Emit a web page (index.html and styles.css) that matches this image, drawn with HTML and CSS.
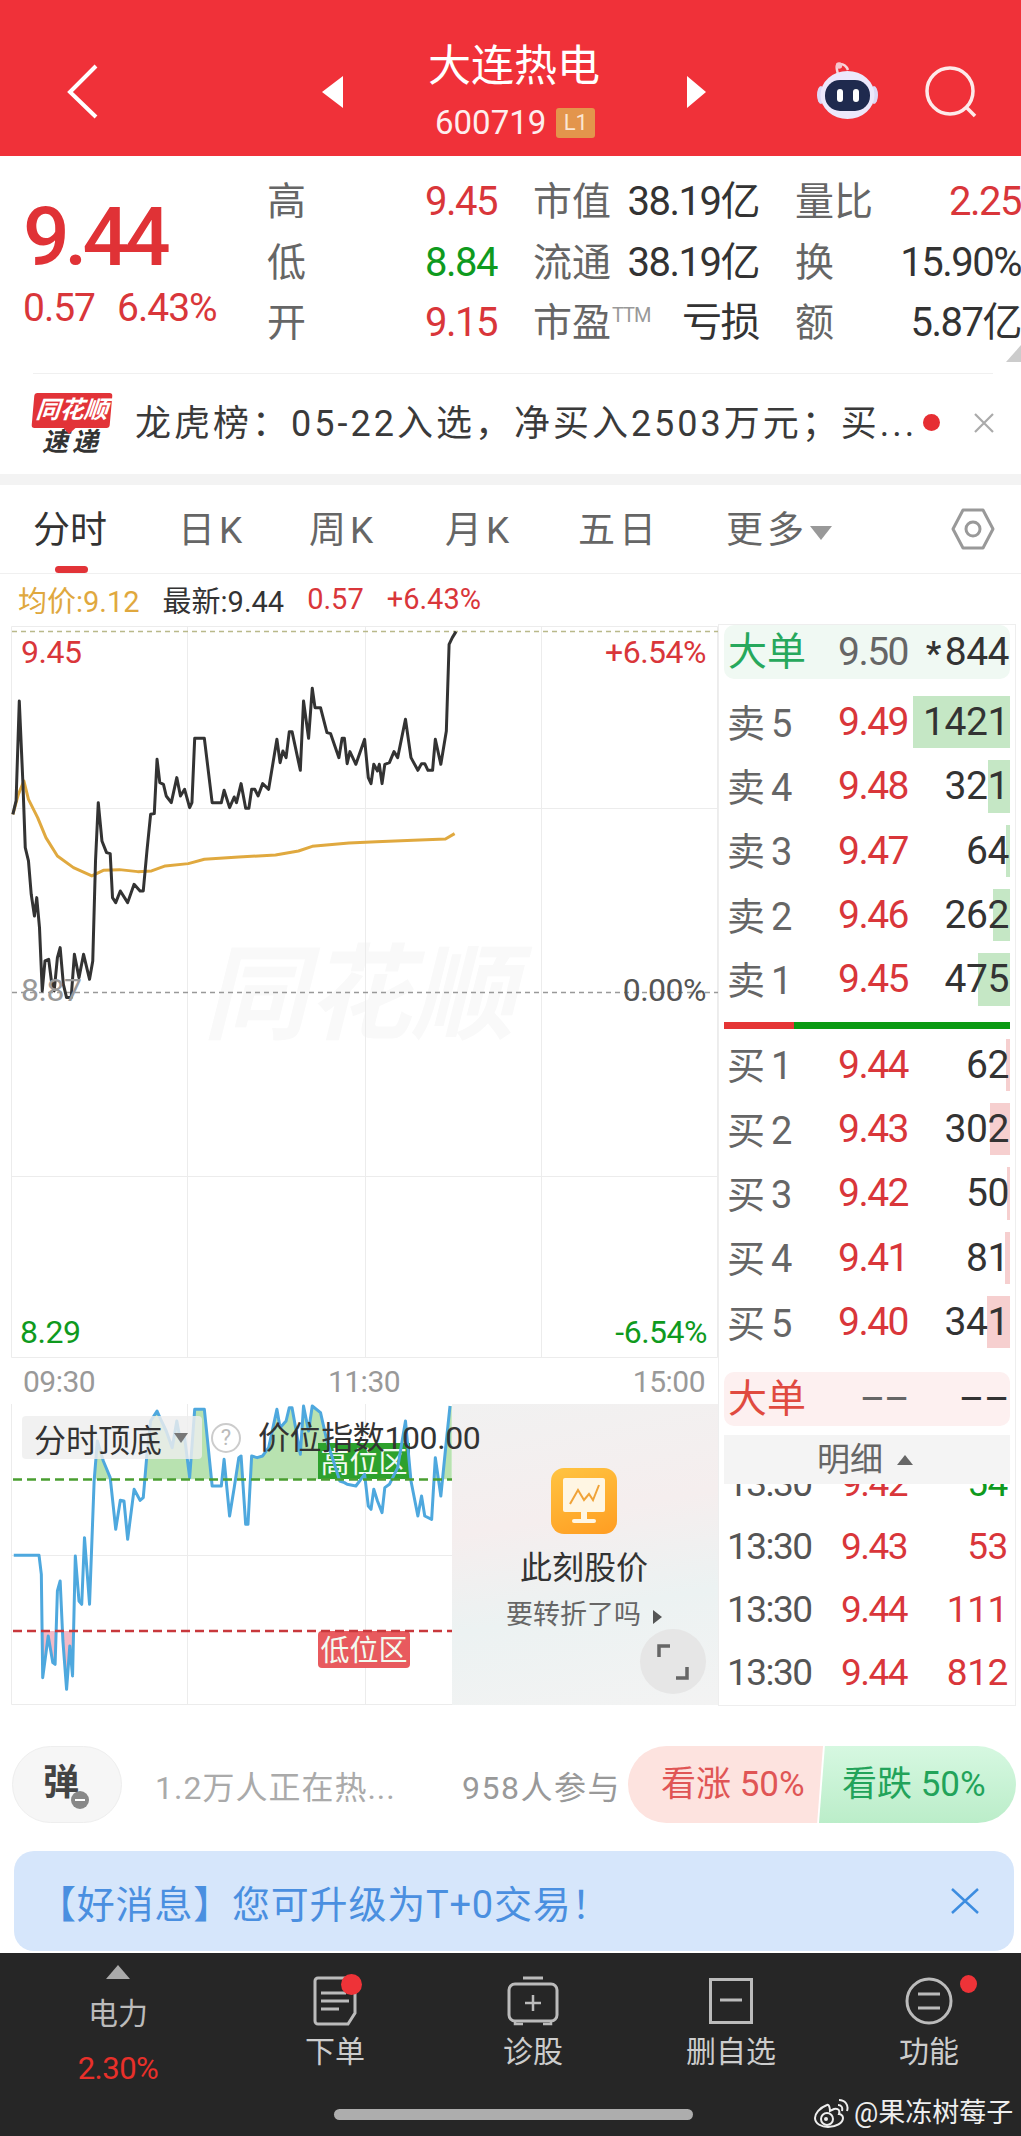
FILE: index.html
```html
<!DOCTYPE html>
<html lang="zh-CN">
<head>
	<meta charset="UTF-8">
	<title>大连热电</title>
	<link rel="stylesheet" href="styles.css">
</head>
<body>
<div class="page">

	<header class="topbar">
		<svg class="back" width="31" height="55" viewBox="0 0 31 55"><path d="M29 2 3 28l26 25" fill="none" stroke="#fff" stroke-width="4"/></svg>
		<span class="tri tri-left"></span>
		<div class="title">
			<div class="title__name">大连热电</div>
			<div class="title__code">600719<span class="badge-l1">L1</span></div>
		</div>
		<span class="tri tri-right"></span>
		<svg class="robot" width="63" height="57" viewBox="0 0 63 57">
			<path d="M22 12C20 5 20 2 24 2c3 0 6 1 8 6" fill="none" stroke="#f7d6dc" stroke-width="2.5"/>
			<circle cx="23" cy="3.5" r="3.2" fill="#f7c4cc"/>
			<ellipse cx="5" cy="33" rx="4" ry="9" fill="#dcd8f5"/>
			<ellipse cx="58" cy="33" rx="4" ry="9" fill="#dcd8f5"/>
			<ellipse cx="31.500" cy="33" rx="27" ry="24" fill="#ece8fb"/>
			<rect x="9" y="18" width="45" height="31" rx="15" fill="#1f2a4e"/>
			<rect x="21" y="27" width="6" height="13" rx="3" fill="#fff"/>
			<rect x="37" y="27" width="6" height="13" rx="3" fill="#fff"/>
		</svg>
		<svg class="search" width="52" height="52" viewBox="0 0 52 52">
			<circle cx="25" cy="25" r="23" fill="none" stroke="#fdeaea" stroke-width="3.500"/>
			<path d="M41 41l9 9" stroke="#fdeaea" stroke-width="3.500"/>
		</svg>
	</header>

	<section class="quote">
		<div class="quote__price">
			<div class="price">9.44</div>
			<div class="change"><span>0.57</span><span>6.43%</span></div>
		</div>
		<div class="stats">
			<div class="lab">高</div><div class="val up">9.45</div>
			<div class="lab lab-mid">市值</div><div class="val dark">38.19亿</div>
			<div class="lab lab-end">量比</div><div class="val up">2.25</div>

			<div class="lab">低</div><div class="val down">8.84</div>
			<div class="lab lab-mid">流通</div><div class="val dark">38.19亿</div>
			<div class="lab lab-end">换</div><div class="val dark">15.90%</div>

			<div class="lab">开</div><div class="val up">9.15</div>
			<div class="lab lab-mid">市盈<sup class="ttm">TTM</sup></div><div class="val dark">亏损</div>
			<div class="lab lab-end">额</div><div class="val dark">5.87亿</div>
		</div>
		<span class="corner"></span>
	</section>

	<section class="news">
		<div class="news__logo">
			<div class="news__tag">同花顺</div>
			<div class="news__sub">速递</div>
		</div>
		<div class="news__text">龙虎榜：05-22入选，净买入2503万元；买...</div>
		<span class="news__dot"></span>
		<svg class="news__close" width="22" height="20" viewBox="0 0 22 20"><path d="M2 1l18 18M20 1 2 19" stroke="#aaa" stroke-width="2.200"/></svg>
	</section>

	<nav class="tabs">
		<a class="tab tab--on">分时</a>
		<a class="tab">日K</a>
		<a class="tab">周K</a>
		<a class="tab">月K</a>
		<a class="tab">五日</a>
		<a class="tab">更多<i class="tab__arrow"></i></a>
		<svg class="tab__gear" width="44" height="42" viewBox="0 0 44 42">
			<path d="M12 2h20l10 19-10 19H12L2 21z" fill="none" stroke="#999" stroke-width="3" stroke-linejoin="round"/>
			<circle cx="22" cy="21" r="7" fill="none" stroke="#999" stroke-width="3"/>
		</svg>
	</nav>

	<div class="infoline">
		<span class="avg">均价:9.12</span>
		<span class="dark">最新:9.44</span>
		<span class="up">0.57</span>
		<span class="up">+6.43%</span>
	</div>

	<div class="market">
		<div class="charts">
			<div class="chart">
				<div class="chart__mark">同花顺</div>
				<svg class="chart__svg" width="707" height="732" viewBox="11 625 707 732">
					<g fill="none" stroke="#ececec" stroke-width="1">
						<path d="M11.500 625.500H717.500V1356.500H11.500Z"/>
						<path d="M187.500 625V1357M365.500 625V1357M541.500 625V1357M11 807.500H718M11 1175.500H718"/>
					</g>
					<path d="M12 630.500H718" stroke="#b9b98a" stroke-width="1.500" stroke-dasharray="5 4"/>
					<path d="M12 991.500H718" stroke="#999" stroke-width="1.500" stroke-dasharray="5 4"/>
					<g transform="translate(0 500) scale(.4592 .3333)" fill="none" stroke-linejoin="round">
						<path vector-effect="non-scaling-stroke" stroke="#e0a93f" stroke-width="3" d="M28 940 40 880 52 840 62 895 82 950 100 1010 125 1065 160 1100 200 1125 225 1108 260 1106 300 1112 330 1110 360 1095 410 1088 445 1075 520 1068 600 1062 650 1050 680 1036 760 1026 820 1022 900 1018 970 1014 990 998"/>
						<path vector-effect="non-scaling-stroke" stroke="#333" stroke-width="3" d="M28 940 35 900 42 600 50 850 55 1040 62 1080 68 1180 75 1245 80 1190 86 1280 92 1470 98 1380 106 1375 112 1440 118 1470 125 1370 131 1340 138 1450 145 1490 155 1490 162 1360 172 1430 182 1360 195 1435 202 1380 208 1080 214 905 222 1020 232 1055 240 1058 245 1190 252 1205 262 1170 278 1205 292 1150 305 1170 312 1170 320 1050 328 940 336 938 342 775 348 845 356 850 362 885 373 905 385 830 393 885 402 865 413 920 418 905 424 712 445 712 462 905 482 905 488 868 500 920 510 888 515 905 525 848 535 922 542 922 548 865 555 865 562 885 572 848 585 865 603 715 610 785 616 750 623 770 630 692 636 692 654 808 661 600 672 712 680 562 686 620 698 620 712 695 720 698 738 770 745 712 750 712 756 788 762 752 775 790 794 715 802 830 808 848 814 790 822 810 826 790 832 848 838 790 848 785 858 752 866 770 883 655 895 770 910 808 918 788 925 788 932 808 942 808 948 715 960 790 972 690 978 430 985 410 993 392"/>
					</g>
				</svg>
				<span class="tag tag--tl up">9.45</span>
				<span class="tag tag--tr up">+6.54%</span>
				<span class="tag tag--ml">8.87</span>
				<span class="tag tag--mr">0.00%</span>
				<span class="tag tag--bl down">8.29</span>
				<span class="tag tag--br down">-6.54%</span>
			</div>

			<div class="axis"><span>09:30</span><span>11:30</span><span>15:00</span></div>

			<div class="osc">
				<svg class="osc__svg" width="707" height="301" viewBox="11 1403 707 301">
					<defs>
						<clipPath id="clip-high"><rect x="0" y="190" width="984" height="225"/></clipPath>
						<clipPath id="clip-low"><rect x="0" y="870" width="984" height="240"/></clipPath>
						<path id="osc-area" d="M30 643 85 643 90 700 93 1010 105 885 115 965 120 970 125 750 131 720 137 900 145 1045 152 915 158 1005 164 645 172 780 178 790 184 590 195 790 205 420 212 300 225 360 240 410 252 565 262 478 270 480 278 595 292 445 305 478 312 470 320 340 328 240 342 210 350 235 362 270 375 320 385 240 393 300 402 290 413 410 424 205 445 205 462 435 482 435 488 355 500 525 510 440 520 350 525 345 535 550 540 550 548 345 560 350 572 345 585 320 603 205 610 260 623 240 630 200 636 200 654 340 661 195 672 270 680 195 698 215 712 300 740 420 750 425 756 430 775 435 794 400 802 495 808 505 814 445 822 480 832 515 838 440 848 430 866 380 883 240 895 420 910 525 918 465 925 525 940 535 948 350 960 465 972 300 980 195 984 195 984 650 30 650Z"/>
					</defs>
					<g fill="none" stroke="#ececec">
						<path d="M11.500 1403V1703.500H718"/>
						<path d="M187.500 1403V1704M365.500 1403V1704M11 1554.500H718"/>
					</g>
					<g transform="translate(0 1340) scale(.4592 .3333)">
						<use href="#osc-area" fill="#b8e2b0" clip-path="url(#clip-high)"/>
						<use href="#osc-area" fill="#f3b9c6" clip-path="url(#clip-low)"/>
					</g>
					<rect x="318" y="1442" width="92" height="36" fill="#2da12d"/>
					<text class="zone-text" x="364" y="1472">高位区</text>
					<rect x="318" y="1630" width="92" height="37" rx="4" fill="#e85a5e"/>
					<text class="zone-text" x="364" y="1660">低位区</text>
					<g transform="translate(0 1340) scale(.4592 .3333)">
						<path vector-effect="non-scaling-stroke" fill="none" stroke="#4ea8de" stroke-width="3" stroke-linejoin="round" d="M30 643 85 643 90 700 93 1010 105 885 115 965 120 970 125 750 131 720 137 900 145 1045 152 915 158 1005 164 645 172 780 178 790 184 590 195 790 205 420 212 300 225 360 240 410 252 565 262 478 270 480 278 595 292 445 305 478 312 470 320 340 328 240 342 210 350 235 362 270 375 320 385 240 393 300 402 290 413 410 424 205 445 205 462 435 482 435 488 355 500 525 510 440 520 350 525 345 535 550 540 550 548 345 560 350 572 345 585 320 603 205 610 260 623 240 630 200 636 200 654 340 661 195 672 270 680 195 698 215 712 300 740 420 750 425 756 430 775 435 794 400 802 495 808 505 814 445 822 480 832 515 838 440 848 430 866 380 883 240 895 420 910 525 918 465 925 525 940 535 948 350 960 465 972 300 980 195"/>
					</g>
					<path d="M13 1478.500H452" stroke="#4a9e30" stroke-width="2.500" stroke-dasharray="9 5"/>
					<path d="M13 1630H452" stroke="#c8383c" stroke-width="2.500" stroke-dasharray="9 5"/>
				</svg>
				<div class="osc__head">
					<div class="osc__chip">分时顶底<i class="osc__arrow"></i></div>
					<span class="osc__help">?</span>
					<span class="osc__index">价位指数100.00</span>
				</div>
				<div class="osc__side">
					<div class="osc__icon">
						<svg width="44" height="50" viewBox="0 0 44 50">
							<rect x="1" y="2" width="42" height="34" rx="2" fill="#fff6e3"/>
							<path d="M8 28 16 14 22 24 27 18 31 24 37 9" fill="none" stroke="#f0a338" stroke-width="2"/>
							<rect x="19" y="36" width="6" height="7" fill="#fff6e3"/>
							<rect x="10" y="43" width="24" height="4" rx="2" fill="#fff6e3"/>
						</svg>
					</div>
					<div class="osc__title">此刻股价</div>
					<div class="osc__sub">要转折了吗<i class="osc__more"></i></div>
					<div class="osc__expand">
						<svg width="32" height="36" viewBox="0 0 32 36"><path d="M2 13V2H13M30 23V34H19" fill="none" stroke="#666" stroke-width="3.500"/></svg>
					</div>
				</div>
			</div>
		</div>

		<aside class="book">
			<div class="big big--buy"><span class="big__name">大单</span><span class="big__price">9.50</span><span class="big__qty"><i>*</i>844</span></div>

			<div class="rows">
				<div class="row"><i class="bar bar--sell" style="width:97px"></i><span class="row__name">卖5</span><span class="row__price">9.49</span><span class="row__qty">1421</span></div>
				<div class="row"><i class="bar bar--sell" style="width:22px"></i><span class="row__name">卖4</span><span class="row__price">9.48</span><span class="row__qty">321</span></div>
				<div class="row"><i class="bar bar--sell" style="width:4px"></i><span class="row__name">卖3</span><span class="row__price">9.47</span><span class="row__qty">64</span></div>
				<div class="row"><i class="bar bar--sell" style="width:17px"></i><span class="row__name">卖2</span><span class="row__price">9.46</span><span class="row__qty">262</span></div>
				<div class="row"><i class="bar bar--sell" style="width:32px"></i><span class="row__name">卖1</span><span class="row__price">9.45</span><span class="row__qty">475</span></div>
			</div>

			<div class="split"><i class="split__red" style="width:70px"></i><i class="split__green"></i></div>

			<div class="rows">
				<div class="row"><i class="bar bar--buy" style="width:4px"></i><span class="row__name">买1</span><span class="row__price">9.44</span><span class="row__qty">62</span></div>
				<div class="row"><i class="bar bar--buy" style="width:20px"></i><span class="row__name">买2</span><span class="row__price">9.43</span><span class="row__qty">302</span></div>
				<div class="row"><i class="bar bar--buy" style="width:3px"></i><span class="row__name">买3</span><span class="row__price">9.42</span><span class="row__qty">50</span></div>
				<div class="row"><i class="bar bar--buy" style="width:5px"></i><span class="row__name">买4</span><span class="row__price">9.41</span><span class="row__qty">81</span></div>
				<div class="row"><i class="bar bar--buy" style="width:23px"></i><span class="row__name">买5</span><span class="row__price">9.40</span><span class="row__qty">341</span></div>
			</div>

			<div class="big big--sell"><span class="big__name">大单</span><span class="big__price">––</span><span class="big__qty">––</span></div>

			<div class="detail-head">明细<i class="detail-head__arrow"></i></div>
			<div class="details">
				<div class="detail"><span class="detail__time">13:30</span><span class="up">9.42</span><span class="detail__qty down">54</span></div>
				<div class="detail"><span class="detail__time">13:30</span><span class="up">9.43</span><span class="detail__qty up">53</span></div>
				<div class="detail"><span class="detail__time">13:30</span><span class="up">9.44</span><span class="detail__qty up">111</span></div>
				<div class="detail"><span class="detail__time">13:30</span><span class="up">9.44</span><span class="detail__qty up">812</span></div>
			</div>
		</aside>
	</div>

	<section class="social">
		<div class="danmu">弹<i class="danmu__minus"></i></div>
		<div class="social__hot">1.2万人正在热...</div>
		<div class="social__join">958人参与</div>
		<div class="vote">
			<div class="vote__up">看涨 50%</div>
			<div class="vote__down">看跌 50%</div>
		</div>
	</section>

	<section class="notice">
		<span>【好消息】您可升级为T+0交易！</span>
		<svg width="28" height="26" viewBox="0 0 28 26"><path d="M1 1l26 24M27 1 1 25" stroke="#3d8de0" stroke-width="2.500"/></svg>
	</section>

	<footer class="dock">
		<div class="dock__item dock__item--quote">
			<span class="dock__tri"></span>
			<span class="dock__name">电力</span>
			<span class="dock__pct">2.30%</span>
		</div>
		<div class="dock__item">
			<div class="dock__icon">
				<svg width="47" height="50" viewBox="0 0 47 50">
					<path d="M6 2H40a3 3 0 0 1 3 3V37L36 48H6a3 3 0 0 1-3-3V5a3 3 0 0 1 3-3Z" fill="none" stroke="#bbb" stroke-width="3"/>
					<path d="M9 17H34M9 25H37M9 33H27" stroke="#bbb" stroke-width="3"/>
				</svg>
				<i class="dock__dot dock__dot--doc"></i>
			</div>
			<span class="dock__label">下单</span>
		</div>
		<div class="dock__item">
			<div class="dock__icon">
				<svg width="52" height="50" viewBox="0 0 52 50">
					<path d="M16 2H36" stroke="#bbb" stroke-width="3"/>
					<rect x="2" y="8" width="48" height="37" rx="6" fill="none" stroke="#bbb" stroke-width="3"/>
					<path d="M8 45v3H16M44 45v3H36M26 19V35M18 27H34" fill="none" stroke="#bbb" stroke-width="2.500"/>
				</svg>
			</div>
			<span class="dock__label">诊股</span>
		</div>
		<div class="dock__item">
			<div class="dock__icon">
				<svg width="44" height="46" viewBox="0 0 44 46">
					<rect x="1.500" y="1.500" width="41" height="43" fill="none" stroke="#bbb" stroke-width="3"/>
					<path d="M11 22H33" stroke="#bbb" stroke-width="3"/>
				</svg>
			</div>
			<span class="dock__label">删自选</span>
		</div>
		<div class="dock__item">
			<div class="dock__icon">
				<svg width="48" height="48" viewBox="0 0 48 48">
					<circle cx="24" cy="24" r="22" fill="none" stroke="#bbb" stroke-width="3"/>
					<path d="M13 17H35M13 31H35" stroke="#bbb" stroke-width="3"/>
				</svg>
				<i class="dock__dot dock__dot--func"></i>
			</div>
			<span class="dock__label">功能</span>
		</div>
		<span class="dock__home"></span>
		<div class="dock__mark">
			<svg width="35" height="29" viewBox="0 0 35 29">
				<path d="M13 6C5 9 1 15 1 19c0 6 7 9 13 9 8 0 15-4 15-9 0-3-3-4-4-4 1-3 0-6-5-5l-4 2c0-3-1-7-3-6Z" fill="none" stroke="#eee" stroke-width="2"/>
				<circle cx="13" cy="20" r="6" fill="none" stroke="#eee" stroke-width="2"/>
				<circle cx="12" cy="20" r="2" fill="#eee"/>
				<path d="M24 6c3 0 5 2 4 6M25 1c6 0 10 5 8 11" fill="none" stroke="#eee" stroke-width="2"/>
			</svg>
			<span>@果冻树莓子</span>
		</div>
	</footer>

</div>
</body>
</html>
```

FILE: styles.css
```css
* {
    margin: 0;
    padding: 0;
    box-sizing: border-box;
}

body {
    background: #fff;
    font-family: Roboto, "Noto Sans CJK SC", sans-serif;
    color: #333;
}

i {
    font-style: normal;
}

.page {
    width: 1021px;
    height: 2136px;
    overflow: hidden;
    position: relative;
}

.up { color: #d9363a; }
.down { color: #0f9a1e; }
.dark { color: #333; }

/* top red bar */
.topbar {
    height: 156px;
    background: #f03139;
    display: grid;
    grid-template-columns: 31px 224px 21px 344px 19px 110px 63px 46px 52px;
    padding-left: 67px;
    align-items: center;
    color: #fff;
}

.back { grid-column: 1; margin-top: 26px; }
.tri-left { grid-column: 3; }
.title { grid-column: 4; }
.tri-right { grid-column: 5; }
.robot { grid-column: 7; margin-top: 25px; }
.search { grid-column: 9; margin-top: 28px; }

.tri {
    width: 0;
    height: 0;
    border-top: 16px solid transparent;
    border-bottom: 16px solid transparent;
    align-self: start;
    margin-top: 76px;
}

.tri-left { border-right: 21px solid #fff; }
.tri-right { border-left: 19px solid #fff; }

.title {
    align-self: start;
    padding-top: 41px;
    padding-left: 85px;
}

.title__name {
    font-size: 43px;
    line-height: 50px;
    white-space: nowrap;
}

.title__code {
    display: flex;
    align-items: center;
    font-size: 33px;
    line-height: 44px;
    margin-top: 10px;
    padding-left: 7px;
    color: #fdeeee;
}

.badge-l1 {
    width: 39px;
    height: 30px;
    margin-left: 10px;
    background: #e3954c;
    border-radius: 3px;
    font-size: 22px;
    line-height: 30px;
    text-align: center;
    color: #fbe6d3;
}

/* quote block */
.quote {
    height: 218px;
    display: flex;
    padding-left: 23px;
    position: relative;
}

.quote__price {
    width: 248px;
    padding-top: 41px;
}

.price {
    font-size: 82px;
    font-weight: 500;
    line-height: 80px;
    letter-spacing: -5px;
    color: #e03236;
}

.change {
    display: flex;
    gap: 22px;
    margin-top: 9px;
    font-size: 39px;
    line-height: 44px;
    letter-spacing: -1px;
    color: #d9363a;
}

.stats {
    display: grid;
    grid-template-columns: 38px 192px 130px 132px 116px 146px;
    grid-auto-rows: 60.5px;
    margin-top: 16px;
    align-items: center;
    white-space: nowrap;
}

.lab {
    font-size: 39px;
    line-height: 44px;
    color: #666;
}

.lab-mid { padding-left: 36px; }
.lab-end { padding-left: 36px; }

.ttm {
    font-size: 20px;
    line-height: 0;
    vertical-align: 14px;
    color: #999;
    letter-spacing: -1px;
    margin-left: 1px;
}

.val {
    font-size: 40px;
    line-height: 44px;
    letter-spacing: -1.5px;
    text-align: right;
}

.corner {
    position: absolute;
    right: 0;
    top: 189px;
    border-left: 15px solid transparent;
    border-bottom: 17px solid #ccc;
}

/* news strip */
.news {
    height: 100px;
    display: flex;
    align-items: center;
    padding: 0 26px 0 33px;
    position: relative;
}

.news::before {
    content: "";
    position: absolute;
    left: 33px;
    right: 28px;
    top: -1px;
    height: 1px;
    background: #f0f0f0;
}

.news__logo {
    width: 78px;
    text-align: center;
}

.news__tag {
    position: relative;
    height: 35px;
    background: #e23338;
    border-radius: 3px;
    transform: skewX(-5deg);
    color: #fff;
    font-size: 24px;
    font-weight: 700;
    font-style: italic;
    line-height: 35px;
}

.news__tag::after {
    content: "";
    position: absolute;
    left: 32px;
    top: 35px;
    border-left: 6px solid transparent;
    border-right: 6px solid transparent;
    border-top: 6px solid #e23338;
}

.news__sub {
    font-size: 26px;
    font-weight: 700;
    font-style: italic;
    line-height: 28px;
    letter-spacing: 4px;
    color: #333;
}

.news__text {
    margin-left: 24px;
    width: 788px;
    font-size: 36px;
    line-height: 44px;
    letter-spacing: 3px;
    white-space: nowrap;
    color: #3a3a3a;
}

.news__dot {
    width: 17px;
    height: 17px;
    border-radius: 50%;
    background: #e62e33;
    margin-top: -4px;
}

.news__close {
    margin-left: 33px;
    margin-top: -2px;
}

/* tabs */
.tabs {
    margin-top: 11px;
    height: 89px;
    border-bottom: 1px solid #f0f0f0;
    display: grid;
    grid-template-columns: 145px 131px 136px 133px 148px 225px 44px;
    padding-left: 33px;
    align-items: start;
    background: #fff;
    box-shadow: 0 -11px 0 #f3f3f3;
}

.tab {
    position: relative;
    height: 88px;
    padding-top: 24px;
    font-size: 37px;
    line-height: 44px;
    letter-spacing: 4px;
    color: #666;
    white-space: nowrap;
}

.tab--on {
    color: #333;
    letter-spacing: 0;
}

.tab--on::after {
    content: "";
    position: absolute;
    left: 22px;
    bottom: 0;
    width: 33px;
    height: 7px;
    border-radius: 4px;
    background: #e23338;
}

.tab__arrow {
    display: inline-block;
    margin-left: 2px;
    border-left: 11px solid transparent;
    border-right: 11px solid transparent;
    border-top: 14px solid #999;
    vertical-align: 3px;
}

.tab__gear {
    margin-top: 23px;
}

/* info line above chart */
.infoline {
    height: 50px;
    display: flex;
    align-items: center;
    gap: 23px;
    padding-left: 18px;
    font-size: 29px;
    white-space: nowrap;
}

.avg { color: #e0a83e; }

/* main area */
.market {
    display: flex;
    height: 1082px;
}

.charts {
    width: 718px;
    padding: 2px 0 0 11px;
    flex: none;
}

.chart {
    position: relative;
    height: 732px;
}

.chart__svg {
    display: block;
    position: relative;
}

.chart__mark {
    position: absolute;
    left: 192px;
    top: 315px;
    font-size: 104px;
    line-height: 110px;
    font-weight: 700;
    font-style: italic;
    color: #f9f9f9;
    white-space: nowrap;
}

.tag {
    position: absolute;
    font-size: 32px;
    line-height: 36px;
    letter-spacing: -.5px;
    white-space: nowrap;
}

.tag--tl { left: 10px; top: 8px; }
.tag--tr { right: 12px; top: 8px; }
.tag--ml { left: 10px; top: 346px; color: #999; }
.tag--mr { right: 12px; top: 346px; color: #555; }
.tag--bl { left: 9px; top: 688px; }
.tag--br { right: 11px; top: 688px; }

.axis {
    height: 46px;
    display: flex;
    justify-content: space-between;
    align-items: center;
    padding: 0 13px 0 12px;
    font-size: 30px;
    letter-spacing: -.5px;
    color: #999;
}

/* lower oscillator */
.osc {
    position: relative;
    height: 301px;
}

.osc__svg {
    display: block;
}

.zone-text {
    font-size: 29px;
    text-anchor: middle;
    fill: #f2fbf0;
}

.osc__head {
    position: absolute;
    z-index: 2;
    left: 11px;
    top: 12px;
    display: flex;
    align-items: center;
    white-space: nowrap;
}

.osc__chip {
    width: 180px;
    height: 43px;
    padding-left: 12px;
    display: flex;
    align-items: center;
    background: rgba(238, 238, 238, .82);
    border-radius: 4px;
    font-size: 32px;
    color: #333;
}

.osc__arrow {
    margin-left: 12px;
    border-left: 7px solid transparent;
    border-right: 7px solid transparent;
    border-top: 10px solid #777;
}

.osc__help {
    width: 30px;
    height: 30px;
    margin-left: 9px;
    border: 2px solid #ccc;
    border-radius: 50%;
    background: rgba(255, 255, 255, .8);
    font-size: 22px;
    line-height: 26px;
    text-align: center;
    color: #bbb;
}

.osc__index {
    margin-left: 17px;
    font-size: 32px;
    line-height: 40px;
    letter-spacing: -.4px;
    color: #333;
}

.osc__side {
    position: absolute;
    z-index: 1;
    right: 0;
    top: 0;
    width: 266px;
    height: 301px;
    display: flex;
    flex-direction: column;
    align-items: center;
    padding: 64px 2px 0 0;
    background: linear-gradient(170deg, #f1f1f1 0%, #f5eeee 38%, #ecf2f2 66%, #f3f3f3 100%);
}

.osc__icon {
    width: 66px;
    height: 66px;
    display: flex;
    align-items: center;
    justify-content: center;
    border-radius: 13px;
    background: linear-gradient(160deg, #ffc441, #ff9d22);
}

.osc__title {
    margin-top: 13px;
    font-size: 32px;
    line-height: 42px;
    color: #333;
}

.osc__sub {
    margin-top: 10px;
    font-size: 27px;
    line-height: 32px;
    color: #666;
}

.osc__more {
    display: inline-block;
    margin-left: 12px;
    border-top: 7px solid transparent;
    border-bottom: 7px solid transparent;
    border-left: 9px solid #555;
}

.osc__expand {
    position: absolute;
    right: 12px;
    top: 225px;
    width: 66px;
    height: 65px;
    display: flex;
    align-items: center;
    justify-content: center;
    border-radius: 50%;
    background: #e6e6e6;
}

/* order book */
.book {
    width: 298px;
    height: 1082px;
    padding: 0 5px;
    border: 1px solid #eee;
}

.big {
    height: 54px;
    display: grid;
    grid-template-columns: 114px 70px 1fr;
    align-items: center;
    border-radius: 10px;
    white-space: nowrap;
}

.big--buy {
    background: #f0f9f3;
}

.big--buy .big__name { color: #27a85c; }

.big--sell {
    margin-top: 18px;
    background: #fdf0f0;
}

.big--sell .big__name { color: #e04a3f; }
.big--sell .big__price { text-align: right; }

.big__name {
    padding-left: 4px;
    font-size: 39px;
    line-height: 44px;
}

.big__price {
    font-size: 39px;
    letter-spacing: -1.500px;
    color: #666;
}

.big__qty {
    font-size: 39px;
    letter-spacing: -.5px;
    text-align: right;
    padding-right: 1px;
    color: #333;
}

.big__qty i {
    font-size: 34px;
    margin-right: 4px;
    font-weight: 700;
}

.rows {
    margin-top: 11px;
}

.rows + .split + .rows {
    margin-top: 4px;
}

.row {
    position: relative;
    height: 64.330px;
    display: grid;
    grid-template-columns: 114px 76px 1fr;
    align-items: center;
    white-space: nowrap;
}

.bar {
    position: absolute;
    right: 0;
    top: 6px;
    bottom: 6px;
}

.bar--sell { background: #c5e7c5; }
.bar--buy { background: #f6cfcf; }

.row span {
    position: relative;
}

.row__name {
    padding: 0 0 4px 3px;
    font-size: 38px;
    letter-spacing: 6px;
    color: #666;
}

.row__price {
    font-size: 39px;
    letter-spacing: -1.500px;
    color: #d9363a;
}

.row__qty {
    font-size: 39px;
    letter-spacing: -.4px;
    text-align: right;
    padding-right: 1px;
    color: #333;
}

.split {
    display: flex;
    height: 7px;
    margin-top: 10px;
}

.split__red { background: #e53535; }
.split__green { flex: 1; background: #0a9a12; }

.detail-head {
    height: 49px;
    margin-top: 9px;
    position: relative;
    z-index: 1;
    display: flex;
    align-items: center;
    padding: 0 0 5px 93px;
    background: #f4f4f4;
    font-size: 33px;
    color: #666;
}

.detail-head__arrow {
    margin: 5px 0 0 14px;
    border-left: 8px solid transparent;
    border-right: 8px solid transparent;
    border-bottom: 10px solid #666;
}

.details {
    height: 220px;
    display: flex;
    flex-direction: column;
    justify-content: flex-end;
    overflow: hidden;
}

.detail {
    flex: none;
    height: 63px;
    display: grid;
    grid-template-columns: 117px 70px 1fr;
    align-items: center;
    font-size: 37px;
    letter-spacing: -1.500px;
    white-space: nowrap;
}

.detail__time {
    padding-left: 3px;
    color: #555;
}

.detail__qty {
    text-align: right;
    padding-right: 2px;
    letter-spacing: -.4px;
}

/* comment row */
.social {
    margin-top: 40px;
    height: 77px;
    display: flex;
    align-items: center;
    padding-left: 12px;
    white-space: nowrap;
}

.danmu {
    position: relative;
    width: 110px;
    height: 77px;
    border: 1px solid #eee;
    border-radius: 39px;
    background: #f6f6f6;
    padding-left: 30px;
    font-size: 36px;
    font-weight: 700;
    line-height: 72px;
    color: #444;
}

.danmu__minus {
    position: absolute;
    left: 58px;
    top: 44px;
    width: 18px;
    height: 18px;
    border-radius: 50%;
    background: #888 linear-gradient(#fff, #fff) center / 10px 2px no-repeat;
}

.social__hot {
    width: 307px;
    margin-left: 33px;
    font-size: 32px;
    letter-spacing: 1px;
    color: #aaa;
}

.social__join {
    width: 166px;
    font-size: 32px;
    letter-spacing: 1.500px;
    color: #999;
}

.vote {
    display: flex;
    width: 388px;
    height: 77px;
}

.vote__up,
.vote__down {
    flex: none;
    font-size: 35px;
    line-height: 77px;
}

.vote__up {
    width: 195px;
    padding-left: 33px;
    background: #fde3df;
    border-radius: 39px 0 0 39px;
    clip-path: polygon(0 0, 100% 0, 97% 100%, 0 100%);
    color: #e05555;
}

.vote__down {
    width: 197px;
    margin-left: -4px;
    padding-left: 23px;
    background: linear-gradient(#d6f8e1, #bbedc9);
    border-radius: 0 39px 39px 0;
    clip-path: polygon(3% 0, 100% 0, 100% 100%, 0 100%);
    color: #22a35a;
}

/* notice */
.notice {
    width: 1000px;
    height: 100px;
    margin: 28px 0 0 14px;
    padding: 0 35px 0 24px;
    display: flex;
    align-items: center;
    justify-content: space-between;
    background: #d6e6fb;
    border-radius: 20px;
    font-size: 38px;
    letter-spacing: .8px;
    color: #4a8fe0;
    white-space: nowrap;
}

/* bottom bar */
.dock {
    position: relative;
    height: 184px;
    margin-top: 2px;
    display: grid;
    grid-template-columns: 236px repeat(4, 198px);
    background: #262626;
    color: #ccc;
}

.dock__item {
    display: flex;
    flex-direction: column;
    align-items: center;
    padding-top: 23px;
}

.dock__item--quote {
    padding-top: 12px;
}

.dock__tri {
    border-left: 12px solid transparent;
    border-right: 12px solid transparent;
    border-bottom: 14px solid #aaa;
}

.dock__name {
    margin-top: 13px;
    font-size: 30px;
    line-height: 44px;
    color: #bbb;
}

.dock__pct {
    margin-top: 11px;
    font-size: 31px;
    line-height: 44px;
    letter-spacing: -.5px;
    color: #e8302a;
}

.dock__icon {
    position: relative;
    height: 50px;
    display: flex;
    align-items: center;
}

.dock__dot {
    position: absolute;
    border-radius: 50%;
    background: #ee3338;
}

.dock__dot--doc {
    right: -3px;
    top: -2px;
    width: 21px;
    height: 21px;
}

.dock__dot--func {
    left: 55px;
    top: -1px;
    width: 17px;
    height: 18px;
}

.dock__label {
    margin-top: 6px;
    font-size: 30px;
    line-height: 40px;
}

.dock__home {
    position: absolute;
    left: 334px;
    top: 156px;
    width: 359px;
    height: 11px;
    border-radius: 6px;
    background: #adadad;
}

.dock__mark {
    position: absolute;
    left: 814px;
    top: 142px;
    display: flex;
    align-items: center;
    gap: 5px;
    font-size: 27px;
    line-height: 36px;
    color: #eee;
    white-space: nowrap;
}
```
